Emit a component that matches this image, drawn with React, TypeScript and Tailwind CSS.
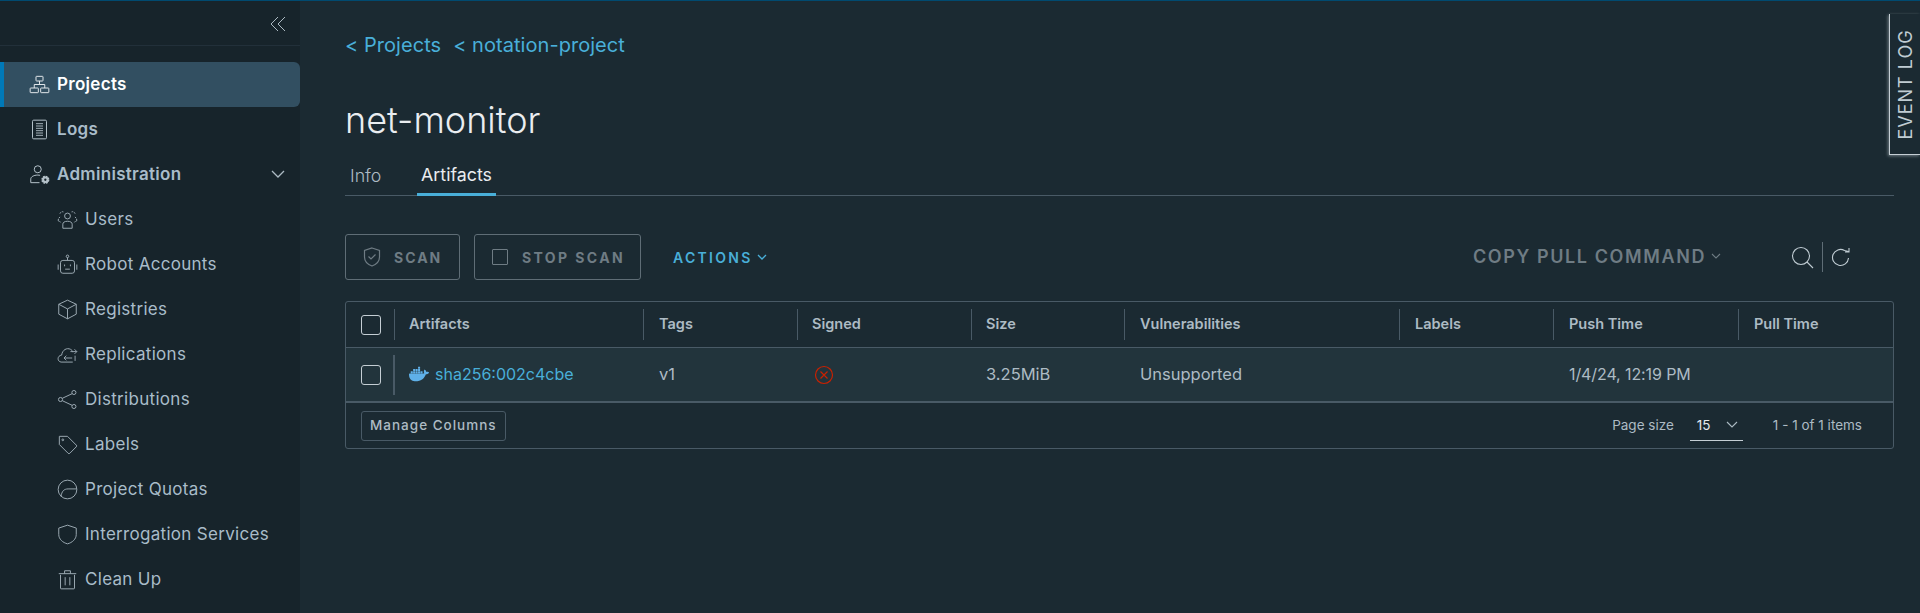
import { SiDocker } from "react-icons/si";
import { ReactNode } from "react";

function Ico({ size = 21, children, className = "" }: { size?: number; children: ReactNode; className?: string }) {
  return (
    <svg width={size} height={size} viewBox="0 0 36 36" fill="none" stroke="currentColor" strokeWidth={1.7} className={`shrink-0 ${className}`}>
      {children}
    </svg>
  );
}

const ProjectsIcon = () => (
  <Ico>
    <rect x="12" y="4" width="12" height="8" rx="1" />
    <rect x="2" y="24" width="14" height="8" rx="1" />
    <rect x="20" y="24" width="14" height="8" rx="1" />
    <path d="M18 12v6M9 24v-6h18v6" />
  </Ico>
);
const LogsIcon = () => (
  <Ico>
    <rect x="6" y="2" width="24" height="32" rx="2" />
    <path d="M12 8h12M12 12h12M12 16h12M12 20h12M12 24h12M12 28h12" strokeWidth={1.5} />
  </Ico>
);
const AdminIcon = () => (
  <Ico>
    <circle cx="15" cy="9" r="6" />
    <path d="M3 32v-6c0-4 5-7 12-7 1.500 0 3 .2 4 .4M3 32h15" />
    <circle cx="28" cy="27" r="5.500" fill="currentColor" strokeWidth={3} strokeDasharray="3 1.300" />
    <circle cx="28" cy="27" r="2" fill="#17242b" stroke="none" />
  </Ico>
);
const UsersIcon = () => (
  <Ico>
    <circle cx="18" cy="12" r="5" />
    <path d="M10 33v-7c0-3 3-5 8-5s8 2 8 5v7z" />
    <path d="M5 8c1-3 4-4 6-3M2 20c0-3 1-5 4-7M31 8c-1-3-4-4-6-3M34 20c0-3-1-5-4-7M2 20l5 3M34 20l-5 3" strokeDasharray="3 1.500" />
  </Ico>
);
const RobotIcon = () => (
  <Ico>
    <rect x="6" y="11" width="24" height="22" rx="4" />
    <circle cx="18" cy="4" r="2.200" />
    <path d="M18 6v5M2 18v9M34 18v9M13 18v3M23 18v3M14 26h8" />
  </Ico>
);
const BoxIcon = () => (
  <Ico>
    <path d="M18 2l15 7v17l-15 8-15-8V9z" />
    <path d="M3 9l15 8 15-8M18 17v17" />
  </Ico>
);
const CloudIcon = () => (
  <Ico>
    <path d="M27 31H7c-7-1-7-11 1-12 1-9 9-13 15-10 2 1 4 3 4 5" />
    <path d="M12 24h14M16 20l-4 4 4 4M23 13h11M30 9l4 4-4 4M31 20v9" strokeWidth={1.600} />
  </Ico>
);
const ShareIcon = () => (
  <Ico>
    <circle cx="6" cy="18" r="3.500" />
    <circle cx="29" cy="6" r="3.500" />
    <circle cx="29" cy="30" r="3.500" />
    <path d="M9 16L26 8M9 20l17 8" />
  </Ico>
);
const TagIcon = () => (
  <Ico>
    <path d="M4 4h14l15 15a2 2 0 0 1 0 3L22 33a2 2 0 0 1-3 0L4 18z" />
    <circle cx="10" cy="10" r="1.500" />
  </Ico>
);
const QuotaIcon = () => (
  <Ico>
    <circle cx="18" cy="18" r="16" />
    <path d="M7 30c1-9 5-13 12-13h15" />
  </Ico>
);
const ShieldIcon = () => (
  <Ico>
    <path d="M18 2l15 5v11c0 8-7 14-15 16C10 32 3 26 3 18V7z" />
  </Ico>
);
const TrashIcon = () => (
  <Ico>
    <path d="M6 10v23a1 1 0 0 0 1 1h22a1 1 0 0 0 1-1V10M3 8h30M13 8V3h10v5M14 14v14M22 14v14" />
  </Ico>
);

const subItems: [string, ReactNode][] = [
  ["Users", <UsersIcon />],
  ["Robot Accounts", <RobotIcon />],
  ["Registries", <BoxIcon />],
  ["Replications", <CloudIcon />],
  ["Distributions", <ShareIcon />],
  ["Labels", <TagIcon />],
  ["Project Quotas", <QuotaIcon />],
  ["Interrogation Services", <ShieldIcon />],
  ["Clean Up", <TrashIcon />],
];

const columns = [
  { label: "Artifacts", w: "w-[249px] pl-[14px]" },
  { label: "Tags", w: "w-[154px] pl-[15px]" },
  { label: "Signed", w: "w-[174px] pl-[14px]" },
  { label: "Size", w: "w-[153px] pl-[14px]" },
  { label: "Vulnerabilities", w: "w-[275px] pl-[15px]" },
  { label: "Labels", w: "w-[154px] pl-[15px]" },
  { label: "Push Time", w: "w-[185px] pl-[15px]" },
  { label: "Pull Time", w: "flex-1 pl-[15px]" },
];

function Checkbox() {
  return <div className="w-[20px] h-[20px] rounded-[3px] border border-[#c5ced4]" />;
}

function Sidebar() {
  return (
    <aside className="w-[300px] shrink-0 bg-[#17242b] text-[#a9bcc9]">
      <div className="h-[45px] flex items-center justify-end pr-[14px] pt-[2px] border-b border-[#22303a]">
        <svg width="16" height="16" viewBox="0 0 16 16" fill="none" stroke="#acbac3" strokeWidth="1">
          <path d="M8 1L1 8l7 7M15 1L8 8l7 7" />
        </svg>
      </div>
      <nav className="pt-[16px] text-[17px] tracking-[0.300px]">
        <div className="h-[45px] flex items-center gap-[7px] pl-[25px] bg-[#324f61] rounded-r-[6px] border-l-4 border-[#0079b8] font-semibold text-white">
          <span className="text-[#e3e8ec]"><ProjectsIcon /></span>Projects
        </div>
        <div className="h-[45px] flex items-center gap-[7px] pl-[29px] font-semibold">
          <span className="text-[#b5c2ca]"><LogsIcon /></span>Logs
        </div>
        <div className="h-[45px] flex items-center gap-[7px] pl-[29px] pr-[15px] font-semibold">
          <span className="text-[#b5c2ca]"><AdminIcon /></span>
          <span className="flex-1">Administration</span>
          <svg width="14" height="9" viewBox="0 0 14 9" fill="none" stroke="#acbac3" strokeWidth="1.300"><path d="M1 1l6 6 6-6" /></svg>
        </div>
        {subItems.map(([label, icon]) => (
          <div key={label} className="h-[45px] flex items-center gap-[7px] pl-[57px] font-normal">
            <span className="text-[#9aa8b1]">{icon}</span>
            {label}
          </div>
        ))}
      </nav>
    </aside>
  );
}

function Toolbar() {
  return (
    <div className="mt-[38px] h-[46px] flex items-center">
      <div className="w-[115px] h-[46px] flex items-center pl-[17px] gap-[13px] rounded-[3px] border border-[#5f6d76] text-[#6f7c84] text-[14px] font-bold tracking-[2px]">
        <svg width="18" height="20" viewBox="0 0 18 20" fill="none" stroke="currentColor" strokeWidth="1.200">
          <path d="M9 1l7.500 2.500V10c0 4.500-3.500 7.500-7.500 9-4-1.500-7.500-4.500-7.500-9V3.500z" />
          <path d="M5.500 9.500l2.500 2.500 4.500-4.500" />
        </svg>
        SCAN
      </div>
      <div className="ml-[14px] w-[167px] h-[46px] flex items-center pl-[17px] gap-[14px] rounded-[3px] border border-[#5f6d76] text-[#6f7c84] text-[14px] font-bold tracking-[2.400px]">
        <div className="w-[16px] h-[16px] border border-[#6f7c84] rounded-[1px]" />
        STOP SCAN
      </div>
      <div className="ml-[32px] flex items-center gap-[4px] text-[#49afd9] text-[14px] font-semibold tracking-[2.300px]">
        ACTIONS
        <svg width="10" height="7" viewBox="0 0 10 7" fill="none" stroke="currentColor" strokeWidth="1.300"><path d="M1 1l4 4 4-4" /></svg>
      </div>
      <div className="flex-1" />
      <div className="pb-[2px] flex items-center gap-[5px] text-[#6f7c84] text-[18px] font-semibold tracking-[1.600px]">
        COPY PULL COMMAND
        <svg width="10" height="7" viewBox="0 0 10 7" fill="none" stroke="currentColor" strokeWidth="1.100"><path d="M1 1l4 4 4-4" /></svg>
      </div>
      <div className="ml-[70px] mr-[44px] flex items-center text-[#c0ccd3]">
        <svg width="23" height="23" viewBox="0 0 23 23" fill="none" stroke="currentColor" strokeWidth="1.100">
          <circle cx="10" cy="10" r="8.500" />
          <path d="M16 16l6 6" />
        </svg>
        <div className="mx-[8px] w-px h-[30px] bg-[#5f6d76]" />
        <svg width="19" height="20" viewBox="0 0 19 20" fill="none" stroke="currentColor" strokeWidth="1.100">
          <path d="M17.500 11a8 8 0 1 1-4-7.500l4 1M18 1v4h-4" />
        </svg>
      </div>
    </div>
  );
}

function ArtifactsTable() {
  return (
    <div className="mt-[21px] rounded-[3px] border border-[#495a66] text-[#adbbc4]">
      {/* header */}
      <div className="h-[46px] flex items-center border-b border-[#495a66] text-[14.500px] font-semibold">
        <div className="w-[49px] h-[31px] flex items-center pl-[15px] border-r border-[#495a66]"><Checkbox /></div>
        {columns.map((c, i) => (
          <div
            key={c.label}
            className={`${c.w} h-[31px] flex items-center pb-[2px] ${i < columns.length - 1 ? "border-r border-[#495a66]" : ""}`}
          >
            {c.label}
          </div>
        ))}
      </div>
      {/* row */}
      <div className="h-[55px] flex items-center bg-[#22343c] border-b-2 border-[#495a66] text-[16.500px]">
        <div className="w-[49px] h-[40px] flex items-center pl-[15px] border-r-2 border-[#495a66]"><Checkbox /></div>
        <div className="w-[249px] flex items-center gap-[6px] pl-[14px] pb-[1px] text-[16px] text-[#49afd9]">
          <SiDocker size={20} className="text-[#5fb0e8]" />
          sha256:002c4cbe
        </div>
        <div className="w-[154px] pl-[15px] pb-[1px]">v1</div>
        <div className="w-[174px] pl-[16px]">
          <svg width="20" height="20" viewBox="0 0 20 20" fill="none" stroke="#c92100" strokeWidth="1.200">
            <circle cx="10" cy="10" r="8.500" />
            <path d="M6.500 6.500l7 7M13.500 6.500l-7 7" />
          </svg>
        </div>
        <div className="w-[153px] pl-[14px] pb-[1px]">3.25MiB</div>
        <div className="w-[275px] pl-[15px] pb-[1px]">Unsupported</div>
        <div className="w-[154px]" />
        <div className="w-[185px] pl-[15px] pb-[1px] text-[16px] tracking-[-0.100px]">1/4/24, 12:19 PM</div>
      </div>
      {/* footer */}
      <div className="h-[45px] flex items-center pl-[15px] pr-[31px] text-[13.500px]">
        <div className="h-[30px] px-[8px] flex items-center rounded-[3px] border border-[#495a66] text-[13.500px] font-medium tracking-[1px]">
          Manage Columns
        </div>
        <div className="flex-1" />
        <span>Page size</span>
        <div className="ml-[16px] w-[53px] h-[30px] flex items-center justify-between pl-[7px] pr-[5px] border-b border-[#c5ced4] text-[#e6eaed]">
          15
          <svg width="12" height="8" viewBox="0 0 12 8" fill="none" stroke="#acbac3" strokeWidth="1.100"><path d="M1 1l5 5 5-5" /></svg>
        </div>
        <span className="ml-[30px]">1 - 1 of 1 items</span>
      </div>
    </div>
  );
}

export default function App() {
  return (
    <div className="relative h-[613px] overflow-hidden flex flex-col bg-[#1b2a32] font-['Inter','Liberation_Sans',sans-serif]">
      <div className="h-px shrink-0 bg-[#004a70]" />
      <div className="flex flex-1 min-h-0">
        <Sidebar />
        <main className="flex-1 pl-[45px] pr-[26px] pt-[31px]">
          <div className="h-[26px] flex items-center gap-[12px] text-[#49afd9] text-[20px] tracking-[0.050px]">
            <span>&lt; Projects</span>
            <span>&lt; notation-project</span>
          </div>
          <h1 className="mt-[40px] h-[44px] flex items-center text-[#eaedf0] text-[36px] font-light leading-none">net-monitor</h1>
          <div className="mt-[16px] h-[38px] flex items-stretch border-b border-[#495a66] text-[17.800px]">
            <div className="w-[72px] flex items-center pl-[5px] text-[#adbbc4] font-light">Info</div>
            <div className="w-[79px] flex items-center justify-center text-[#eaedf0] border-b-[3px] border-[#49afd9] -mb-px">Artifacts</div>
          </div>
          <Toolbar />
          <ArtifactsTable />
        </main>
      </div>
      <div className="absolute right-0 top-[14px] w-[31px] h-[141px] flex items-center justify-center border-l border-b border-[#c5ced4] shadow-[-1px_1px_3px_rgba(200,210,215,0.5)] bg-[#1b2a32] text-[#c0ccd3] text-[18px] tracking-[1px]">
        <span className="-rotate-90 whitespace-nowrap">EVENT LOG</span>
      </div>
    </div>
  );
}
